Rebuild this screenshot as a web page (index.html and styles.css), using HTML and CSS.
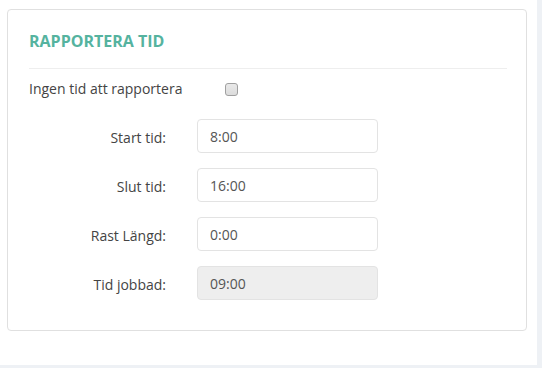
FILE: index.html
```html
<!DOCTYPE html>
<html lang="sv">
<head>
    <meta charset="UTF-8">
    <meta name="viewport" content="width=device-width, initial-scale=1.0">
    <title>Rapportera tid</title>
    <link rel="stylesheet" href="styles.css">
</head>
<body>
    <div class="page">
        <div class="report-box">
            <h2 class="report-title">RAPPORTERA TID</h2>
            <div class="no-time-row">
                <label for="no-time">Ingen tid att rapportera</label>
                <input type="checkbox" id="no-time" class="check">
            </div>
            <div class="time-form">
                <label for="start">Start tid:</label>
                <input type="text" id="start" value="8:00">
                <label for="end">Slut tid:</label>
                <input type="text" id="end" value="16:00">
                <label for="break">Rast Längd:</label>
                <input type="text" id="break" value="0:00">
                <label for="worked">Tid jobbad:</label>
                <input type="text" id="worked" value="09:00" disabled>
            </div>
        </div>
    </div>
</body>
</html>
```

FILE: styles.css
```css
body {
    font-family: 'Open Sans', 'Noto Sans', sans-serif;
    background-color: #eef1f5;
    margin: 0;
    overflow: hidden;
}

.page {
    background-color: white;
    width: 537px;
    height: 365px;
    box-sizing: border-box;
    padding: 9px 0 0 7px;
}

.report-box {
    box-sizing: border-box;
    width: 520px;
    height: 322px;
    border: 1px solid #e0e0e0;
    border-radius: 4px;
    padding: 21px 19px 30px 21px;
}

.report-title {
    margin: 0;
    font-size: 16px;
    line-height: 20px;
    font-weight: 700;
    color: #55b39f;
    padding-bottom: 17px;
    border-bottom: 1px solid #eeeeee;
}

.no-time-row {
    display: flex;
    align-items: center;
    margin-top: 10px;
    font-size: 14px;
    line-height: 20px;
    color: #444;
}

.no-time-row label {
    width: 196px;
}

.check {
    appearance: none;
    -webkit-appearance: none;
    width: 13px;
    height: 13px;
    margin: 1px 0 0 0;
    border: 1px solid #a0a0a0;
    border-radius: 3px;
    background: linear-gradient(#e9e9e9, #dcdcdc);
    box-sizing: border-box;
}

.time-form {
    display: grid;
    grid-template-columns: 137px 181px;
    column-gap: 31px;
    row-gap: 15px;
    margin-top: 20px;
    align-items: center;
}

.time-form label {
    text-align: right;
    font-size: 14px;
    color: #444;
    padding-top: 2px;
}

.time-form input {
    box-sizing: border-box;
    height: 34px;
    width: 181px;
    padding: 0 12px;
    border: 1px solid #e3e3e3;
    border-radius: 4px;
    font-family: 'Open Sans', 'Noto Sans', sans-serif;
    font-size: 14px;
    color: #555;
    background-color: white;
}

.time-form input:disabled {
    background-color: #eeeeee;
    color: #555;
}
```
